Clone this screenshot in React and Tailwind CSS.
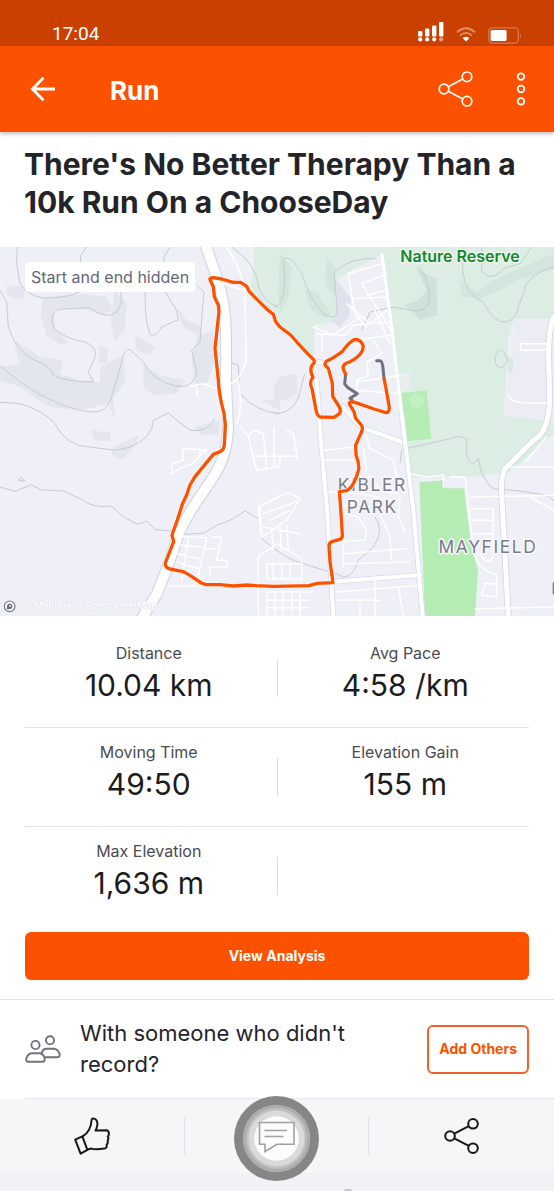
import React from "react";

const ROUTE =
  "M1152 394L1157 419L1167 475Q1170 497 1158 497L1122 486L1067 467Q1048 460 1048 471L1062 494L1067 514L1084 534Q1090 542 1084 556L1067 594L1068 624Q1078 648 1076 668Q1070 690 1062 706Q1052 726 1040 731L1018 734L1022 784L1027 864Q1028 876 1016 878L996 884Q986 888 987 898L990 944L999 1007L952 1009L927 1016L822 1018L770 1016L740 1014L700 1017L660 1013L618 1013L604 1008L576 989L550 974L510 966Q492 960 497 945L521 884L516 864L532 819L548 769L560 744L570 714L585 689L640 622L662 613Q672 608 673 594L676 534L672 499Q656 440 655 399L645 304L657 194L655 174L643 149L640 119L630 98Q628 92 640 92L665 96L700 106L722 106L740 118L748 134L780 166L800 186L820 202L826 222L840 240L872 264L892 287L917 314L940 337Q948 345 936 354Q928 372 939 391Q926 404 936 425L948 489Q952 509 962 510L1002 511L1018 500Q1024 492 1018 480L998 448L997 409L985 364Q966 350 982 341L1000 332L1027 314Q1044 288 1062 278Q1080 274 1089 295Q1092 308 1080 322Q1060 342 1040 348Q1020 356 1037 381";

function Terrain() {
  return (
    <g>
      <rect width="1662" height="1107" fill="#eeeff7" />
      <path d="M762 0H924L930 60L1030 170L1026 230L940 240L942 330L920 320L845 240L822 205L790 175L750 120L762 60Z" fill="#dceee4" />
      <path d="M924 0H1662V216L1544 216L1525 270L1512 500L1662 525V560L1640 580L1530 675L1420 690L1232 693L1205 500L1180 300L1148 20L1050 75L1030 130L1022 240L930 330Z" fill="#dceee4" />
      <path d="M1146 24L1045 75L1010 100L1035 170L1022 220L942 235L944 350L1000 520L1214 540Z" fill="#eeeff7" />
      <path d="M1545 216L1662 225V519L1514 508Z" fill="#ececf5" />
      <path d="M1200 380L1230 375L1232 430L1207 435Z" fill="#e9edf2" />
      <path d="M1205 438L1280 430L1294 575L1218 583Z" fill="#b4ecb4" />
      <circle cx="1250" cy="461" r="22" fill="#c2efc4" />
      <path d="M1258 706L1328 700L1333 724L1392 724L1412 884L1434 972L1425 1107H1275Z" fill="#b4ecb4" />
    </g>
  );
}

function HillShade() {
  return (
    <g fill="#e3e5ef">
      <path d="M130 150L245 140L320 150L338 190L310 205L230 180L160 190L168 250L205 285L185 295L140 265L122 200Z" />
      <path d="M345 130L380 170L375 245L345 285L332 220Z" />
      <path d="M40 280L90 310L120 330L190 340L180 380L235 400L300 405L300 360L370 325L375 405L340 450L345 520L325 470L240 490L150 480L60 420L0 400V360L60 350Z" />
      <path d="M405 265L465 300L450 325L410 310ZM430 355L480 385L555 400L530 440L460 445L430 420ZM530 180L560 220L600 235L610 280L590 260L550 240ZM590 270L640 250L645 340L625 400L590 430L575 340ZM300 295L325 305L320 350L295 345ZM20 115L75 120L70 160L20 145Z" />
      <path d="M790 460L840 455V490L820 480ZM275 550L332 558L330 584L285 580ZM340 600L415 565L410 590L370 636L335 625ZM585 540L660 520L655 560L600 565Z" />
      <path d="M840 389L890 380L892 440L860 460L822 455V415Z" />
    </g>
  );
}

function ReserveShade() {
  return (
    <g fill="#cfe2da">
      <path d="M1250 65L1310 95L1312 205L1260 218L1212 175L1255 160L1280 130Z" />
      <path d="M1380 100L1430 135L1480 100L1660 20L1662 65L1550 100L1500 130L1440 155L1385 150Z" opacity=".7" />
      <path d="M840 20L875 60L865 150L840 200L835 120Z" opacity=".7" />
      <path d="M915 130L950 135L990 195L980 215L930 185ZM980 30L1005 60L1005 150L975 110Z" opacity=".7" />
      <path d="M1520 325L1540 335L1538 375L1524 378Z" opacity=".6" />
      <path d="M1005 95L1050 150L1050 205L1020 240L995 225L1015 180Z" fill="#dfe1ec" />
    </g>
  );
}

function Contours() {
  return (
    <g fill="none" stroke="#c3ccd3" strokeWidth="3" strokeLinejoin="round">
      <path d="M52 0L50 50L60 110Q80 145 130 153Q200 155 245 132M260 0L242 25V50M510 0L492 30V55M0 130L20 165L25 240Q50 320 115 345Q150 355 160 385Q200 405 280 405L265 375L288 325Q285 285 230 280Q160 260 155 225Q155 190 185 186L270 182Q320 220 350 195Q370 170 362 135" />
      <path d="M0 355Q60 410 125 445Q210 490 275 495Q320 500 335 450L365 345Q375 300 390 308L430 345Q460 400 520 415Q580 430 590 375L575 310L600 285Q610 150 612 135L590 115" />
      <path d="M435 135Q435 230 450 260Q465 275 485 240L535 218L530 190L495 135M0 466L60 470Q130 490 165 530Q200 600 270 600L345 610Q430 600 455 545L460 520L505 498Q540 530 570 549Q620 560 645 515" />
      <path d="M0 720L45 733L95 713L120 728L190 732L245 757Q280 785 335 777Q370 815 415 832L440 822L465 848L515 852L560 862L612 858Q650 830 690 820L735 792L775 815M690 345L715 355L720 440Q770 495 840 500M695 0Q770 50 776 120Q790 165 835 180" />
      <path d="M822 180Q865 170 850 35Q870 20 905 80Q950 210 1000 210Q1015 205 1010 170L1003 75Q1050 30 1130 35M1390 0L1388 75Q1400 150 1450 165Q1480 230 1520 225Q1550 215 1555 180L1580 110Q1610 70 1662 60M1445 0V70Q1470 110 1510 65L1560 50L1595 0" />
      <path d="M1255 60Q1290 90 1288 160Q1280 200 1230 190L1180 180L1110 195L1085 250M1495 310Q1515 305 1522 340Q1510 370 1495 360Q1475 340 1495 310M822 500Q895 500 905 410L915 380M1200 648L1205 610L1225 603L1330 580L1375 568L1402 575Q1390 640 1420 650L1435 635Q1445 700 1480 725L1560 732L1640 745L1662 760" />
      <path d="M1125 810Q1155 850 1120 900L1075 940Q1060 990 1030 990L995 975M785 875Q860 940 910 950L990 975M55 700L65 692L75 702Z" />
    </g>
  );
}

function Streets() {
  return (
    <g fill="none" stroke="#fff" strokeLinejoin="round" strokeLinecap="round">
      <path d="M615 -10L650 90Q676 160 678 260L678 400L684 534Q685 620 640 690L590 764Q555 815 535 864L505 954L470 1042L425 1115" stroke="#d3d7e0" strokeWidth="36" />
      <path d="M615 -10L650 90Q676 160 678 260L678 400L684 534Q685 620 640 690L590 764Q555 815 535 864L505 954L470 1042L425 1115" strokeWidth="29" />
      <path d="M670 110L735 130L738 340Q725 410 655 425L610 410L570 418M735 130Q720 60 680 0M715 400Q730 480 710 530M590 412L592 445" strokeWidth="5" />
      <path d="M940 340Q960 345 975 350M950 400L962 570L982 800L1000 1107M1030 480Q1060 520 1095 545L1214 588" stroke="#dadde6" strokeWidth="17" />
      <path d="M940 340Q960 345 975 350M950 400L962 570L982 800L1000 1107M1030 480Q1060 520 1095 545L1214 588" strokeWidth="12" />
      <path d="M1205 500L1240 790L1268 1107M1000 1004L1260 984" stroke="#dadde6" strokeWidth="17" />
      <path d="M1146 22L1175 240L1205 500" strokeWidth="9" />
      <path d="M1205 500L1240 790L1268 1107M1000 1004L1260 984" strokeWidth="12" />
      <path d="M1662 210Q1640 250 1648 400V480Q1640 560 1600 580L1515 665Q1500 690 1506 760L1525 1107" stroke="#d3d7e0" strokeWidth="20" />
      <path d="M1662 210Q1640 250 1648 400V480Q1640 560 1600 580L1515 665Q1500 690 1506 760L1525 1107" strokeWidth="15" />
      <g strokeWidth="4.5">
        <path d="M1145 50L1045 80L1065 200L1100 240M1150 85L1085 110L1170 245M1155 130L1100 145M1158 150L1060 155M1160 190L1110 230L1040 170M950 260L1035 265L1060 235L1165 225M965 265V310M1175 265L1095 275L1065 300M1120 280L1145 320L1100 345L1105 385L1070 400V430L1200 440M1072 405L1200 385M1125 190L1170 290M940 240L1000 265L1080 210" />
        <path d="M1560 290H1640V310H1563ZM1525 445Q1530 465 1580 468H1650M720 535L745 570L770 670L838 660M745 570L760 550L790 560L800 665M760 628H890M822 540V660L840 655V628M860 550L880 560L893 640" />
        <path d="M548 605L620 608L575 650L540 665L515 680V650L550 640ZM600 607V630M775 780L865 735L900 755L860 820L785 870ZM780 780L785 870M790 800L900 760M810 820L870 790M790 840L900 860M815 850L820 910M840 840L845 910M860 835L865 910M775 930L830 890L905 935V1000M775 930V1107M800 950H905V995H800ZM820 950V995M845 950V995M870 950V995M800 1035H940M800 1060H930M800 1082H925M800 1035V1107M825 1035V1107M850 1035V1107M875 1035V1107M900 1035V1107" />
        <path d="M540 868L620 872L595 985M540 895L605 900M530 920L600 935M530 945L595 965M565 875L545 1000M505 1017H612M640 870H665L650 940H680V960H630V985M615 905H650M1096 560L1110 605L1180 640L1195 720M1090 600L1100 680L1150 735L1195 740M972 610L1062 600M975 640L1060 640M990 735L1080 740L1180 760M1030 780L1050 770L1130 780M1030 800L1075 810L1100 850L1095 880L1010 885M1140 800L1170 870L1175 940M1200 750L1195 810L1215 855M1030 920L1220 905M1030 950L1230 945M1030 875V960M1010 1035L1265 1015M1010 1060H1140M1125 990V1107M1080 1070V1107M1195 1020L1210 1107" />
        <path d="M1230 680L1280 690L1330 685V720M1350 690L1395 690L1400 730L1420 910Q1430 965 1490 985V1050L1445 1045L1455 1010H1490M1410 750L1662 745M1412 785H1480M1414 820H1480M1416 860H1480M1480 785V930Q1460 960 1440 920M1425 1085L1662 1080M1510 660H1662M1590 750L1662 790M1580 640L1640 570" />
      </g>
    </g>
  );
}

function MapLabels() {
  return (
    <g fontFamily="Inter, sans-serif" paintOrder="stroke" strokeLinejoin="round" textAnchor="middle">
      <text x="1380" y="44" fontSize="48" fontWeight="600" fill="#16872b" stroke="#eef8f1" strokeWidth="8">Nature Reserve</text>
      <g fontSize="52" letterSpacing="5" fill="#7b7b86" stroke="#f7f7fc" strokeWidth="9">
        <text x="1117" y="733">KIBLER</text>
        <text x="1117" y="797">PARK</text>
        <text x="1464" y="917">MAYFIELD</text>
      </g>
      <path d="M1661 1006V1042" stroke="#7b7b86" strokeWidth="6" />
      <text x="68" y="1087" textAnchor="start" fontSize="29" fill="#fff" stroke="#e2e4ec" strokeWidth="3">© Mapbox © OpenStreetMap</text>
    </g>
  );
}

function RouteMap() {
  return (
    <section aria-label="Route map" className="relative mt-[26px]">
      <svg viewBox="0 0 1662 1107" className="block w-full" role="img" aria-label="Map of the run">
        <Terrain />
        <HillShade />
        <ReserveShade />
        <Contours />
        <Streets />
        <MapLabels />
        <g fill="none" strokeLinejoin="round" strokeLinecap="round">
          <path d={ROUTE} stroke="#fff" strokeWidth="14" opacity=".7" />
          <path d="M1037 381L1034 411L1044 422L1072 440L1050 454L1056 459M1130 341H1140Q1147 342 1149 364L1152 394" stroke="#6d7080" strokeWidth="9" />
          <path d={ROUTE} stroke="#fc5200" strokeWidth="10" />
        </g>
        <g transform="translate(29 1078)">
          <circle r="16" fill="#f4f4f8" stroke="#777985" strokeWidth="3.5" />
          <path d="M-8 9V-1A8 8 0 1 1 0 8Z" fill="#666874" />
          <circle cx="1" cy="-1" r="3" fill="#f4f4f8" />
        </g>
      </svg>
      <span className="absolute left-[25px] top-[15px] rounded-sm bg-white px-1.5 text-base leading-[30px] text-[#666872]">
        Start and end hidden
      </span>
    </section>
  );
}

function ShareIcon({ strokeWidth }) {
  return (
    <svg viewBox="0 0 36 36" className="size-9" fill="none" stroke="currentColor" strokeWidth={strokeWidth}>
      <circle cx="6" cy="18" r="4.8" />
      <circle cx="29" cy="5.8" r="4.8" />
      <circle cx="29" cy="30.2" r="4.8" />
      <path d="M10.3 15.7L24.8 8.1M10.3 20.3L24.8 27.9" />
    </svg>
  );
}

function StatusBar() {
  return (
    <div className="flex h-[46px] items-end justify-between bg-[#c94000] pl-[52px] pr-8 text-white">
      <span className="font-[Roboto,sans-serif] text-[19px] leading-6">17:04</span>
      <div className="flex items-end gap-3 pb-0.5">
        <svg viewBox="0 0 26 20" className="mb-0.5 h-5 w-[26px]" fill="#fff">
          <rect x="0" y="9" width="4.4" height="5.5" rx="1" />
          <rect x="7" y="6.5" width="4.4" height="8" rx="1" />
          <rect x="14" y="3.5" width="4.4" height="11" rx="1" />
          <rect x="21" y="0" width="4.4" height="14.5" rx="1" />
          <circle cx="2.2" cy="17.4" r="2.1" />
          <circle cx="9.2" cy="17.4" r="2.1" />
          <circle cx="16.2" cy="17.4" r="2.1" />
          <circle cx="23.2" cy="17.4" r="2.1" opacity=".5" />
        </svg>
        <svg viewBox="0 0 20 15" className="mb-0.5 h-[15px] w-5" fill="none" stroke="#fff" strokeWidth="1.9">
          <path d="M1 5.2Q10-2.6 19 5.2" opacity=".4" />
          <path d="M4 8.6Q10 3.4 16 8.6" opacity=".4" />
          <path d="M6.6 11Q10 8.6 13.4 11L10 14.6Z" fill="#fff" stroke="none" />
        </svg>
        <svg viewBox="0 0 34 17" className="h-[17px] w-[34px]" fill="none">
          <rect x=".9" y=".9" width="29.4" height="15.2" rx="3.5" stroke="#fff" strokeWidth="1.3" opacity=".3" />
          <rect x="2.6" y="3" width="16" height="11" rx="1.5" fill="#fff" />
          <path d="M32 6Q33.6 8.5 32 11Z" fill="#fff" opacity=".4" />
        </svg>
      </div>
    </div>
  );
}

function AppBar() {
  return (
    <header className="relative flex h-[86px] items-center bg-[#fc5200] pl-[30px] pr-[26px] text-white shadow-[0_2px_4px_rgba(0,0,0,0.25)]">
      <button aria-label="Back">
        <svg viewBox="0 0 26 26" className="size-[26px]" fill="none" stroke="currentColor" strokeWidth="2.8">
          <path d="M25 13H3M13.5 1.8L2.5 13L13.5 24.2" />
        </svg>
      </button>
      <h1 className="ml-[54px] flex-1 pt-1 text-[26px] font-bold leading-8">Run</h1>
      <button aria-label="Share" className="mr-10">
        <ShareIcon strokeWidth="1.7" />
      </button>
      <button aria-label="More options">
        <svg viewBox="0 0 14 36" className="h-9 w-3.5" fill="none" stroke="currentColor" strokeWidth="1.8">
          <circle cx="7" cy="5.6" r="3.3" />
          <circle cx="7" cy="18" r="3.3" />
          <circle cx="7" cy="30.4" r="3.3" />
        </svg>
      </button>
    </header>
  );
}

const STATS = [
  [["Distance", "10.04 km"], ["Avg Pace", "4:58 /km"]],
  [["Moving Time", "49:50"], ["Elevation Gain", "155 m"]],
  [["Max Elevation", "1,636 m"], null],
];

function Stat({ stat }) {
  if (!stat) return <div />;
  return (
    <div className="flex flex-col text-center">
      <dt className="text-base leading-6 text-[#4b4b50]">{stat[0]}</dt>
      <dd className="text-[30px] leading-10 text-[#1c1c1e]">{stat[1]}</dd>
    </div>
  );
}

function StatRow({ row, last }) {
  return (
    <div className={last ? "mx-[25px]" : "mx-[25px] border-b border-[#e4e4e6]"}>
      <dl className="-mx-1 grid grid-cols-[1fr_1px_1fr] pb-[22px] pt-3">
        <Stat stat={row[0]} />
        <div className="mb-2 mt-auto h-[38px] bg-[#dedee2]" />
        <Stat stat={row[1]} />
      </dl>
    </div>
  );
}

function PeopleIcon() {
  return (
    <svg viewBox="0 0 36 28" className="h-7 w-9 shrink-0" fill="none" stroke="#72727e" strokeWidth="1.9" strokeLinejoin="round">
      <circle cx="10.5" cy="10" r="4.1" />
      <circle cx="25" cy="5.3" r="4.1" />
      <path d="M7 18.3H14.5Q18 18.3 19.4 22.6Q20.4 26.8 17.5 26.8H3.5Q.5 26.6 1.3 23.6Q3 18.3 7 18.3Z" />
      <path d="M16.6 18.4Q17.8 13.8 21.5 13.8H28.8Q32.6 14 34.6 18.8Q35.2 22.2 31.8 22.2H19.6" />
    </svg>
  );
}

function BottomBar() {
  return (
    <footer>
      <nav aria-label="Activity actions" className="grid h-[74px] grid-cols-3 items-center divide-x divide-[#e2e2e6] bg-[#f6f6f9] text-[#17171a]">
        <button aria-label="Give kudos" className="flex h-[38px] items-center justify-center">
          <svg viewBox="0 0 36 38" className="h-[38px] w-9" fill="none" stroke="currentColor" strokeWidth="2" strokeLinejoin="round">
            <path d="M1.2 22.6L8.3 19.3L13.4 32.8L6.6 36.6Z" />
            <path d="M8.6 19.4Q17 14.5 17.6 2.7Q17.8 1.3 20 1.6Q23.8 2.8 23.4 7.6Q22.6 11.8 21.6 13.6L32.6 13.2Q35.4 14.2 34.8 17Q35 18.4 33.8 19.4Q35 21.6 33.6 23.8Q34.4 26 32.6 27.8Q33.2 31.2 30.4 31.6Q21 32.8 17.6 31.6L13.2 32.6" />
          </svg>
        </button>
        <div className="relative flex h-[38px] items-center justify-center">
          <button aria-label="Comments" className="absolute -top-[21px] flex size-[85px] items-center justify-center">
            <svg viewBox="0 0 85 85" className="size-full">
              <circle cx="42.5" cy="42.5" r="42.5" fill="#868686" />
              <circle cx="42.5" cy="42.5" r="33.8" fill="#adadad" />
              <circle cx="42.5" cy="42.5" r="30.5" fill="#c0c0c0" />
              <circle cx="42.5" cy="42.5" r="28" fill="#dadada" />
              <circle cx="42.5" cy="42.5" r="22.3" fill="#fcfcfc" />
              <g fill="none" stroke="#a0a0a0" strokeWidth="1.6">
                <path d="M25.5 26.5H60V48.2H43L31 55.5V48.2H25.5Z" />
                <path d="M30.5 34.5H53M30.5 40.5H49.5" />
              </g>
            </svg>
          </button>
        </div>
        <button aria-label="Share activity" className="flex h-[38px] items-center justify-center">
          <ShareIcon strokeWidth="2" />
        </button>
      </nav>
      <div className="flex h-[18px] items-end justify-center bg-[#f2f2f6] pl-[142px]">
        <div className="h-0.5 w-2 rounded-t-full bg-[#c8c8cc]" />
      </div>
    </footer>
  );
}

export default function App() {
  return (
    <div className="bg-white font-[Inter,sans-serif] text-[#242428]">
      <StatusBar />
      <AppBar />
      <main>
        <h2 className="px-6 pt-[13px] text-[30px] font-bold leading-[38px]">
          There's No Better Therapy Than a 10k Run On a ChooseDay
        </h2>
        <RouteMap />
        <section aria-label="Statistics" className="pt-[13px]">
          {STATS.map((row, i) => (
            <StatRow key={row[0][0]} row={row} last={i === STATS.length - 1} />
          ))}
        </section>
        <div className="border-b border-[#e4e4e6] px-[25px] pb-[19px] pt-[7px]">
          <button className="h-12 w-full rounded-md bg-[#fc5200] text-sm font-bold text-white">View Analysis</button>
        </div>
        <section className="ml-[25px] flex items-center gap-[19px] border-b border-[#e8e8ec] py-[18px] pr-[25px]">
          <PeopleIcon />
          <p className="flex-1 text-[22px] leading-[31px]">With someone who didn't record?</p>
          <button className="h-[49px] shrink-0 rounded-md border-2 border-[#f2612a] px-2.5 text-sm font-bold text-[#fc5200]">
            Add Others
          </button>
        </section>
      </main>
      <BottomBar />
    </div>
  );
}
